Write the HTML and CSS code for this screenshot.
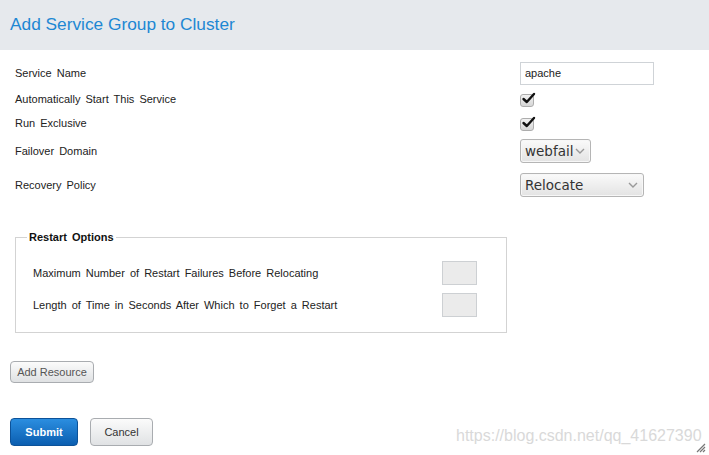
FILE: index.html
```html
<!DOCTYPE html>
<html lang="en">
<head>
  <meta charset="UTF-8" />
  <title>Add Service Group to Cluster</title>
  <link rel="stylesheet" href="styles.css">
</head>
<body>
  <div class="dialog">
    <div class="header">
      <h1>Add Service Group to Cluster</h1>
    </div>

    <div class="form">
      <div class="row row-name">
        <label for="serviceName">Service Name</label>
        <input type="text" id="serviceName" class="text-input" value="apache" />
      </div>

      <div class="row row-check">
        <label>Automatically Start This Service</label>
        <span class="check">
          <svg width="15" height="13" viewBox="0 0 15 13"><path d="M2.5 7 L5.8 10 L13 2" fill="none" stroke="#111" stroke-width="2.4" stroke-linecap="round" stroke-linejoin="round"/></svg>
        </span>
      </div>

      <div class="row row-check row-excl">
        <label>Run Exclusive</label>
        <span class="check">
          <svg width="15" height="13" viewBox="0 0 15 13"><path d="M2.5 7 L5.8 10 L13 2" fill="none" stroke="#111" stroke-width="2.4" stroke-linecap="round" stroke-linejoin="round"/></svg>
        </span>
      </div>

      <div class="row row-domain">
        <label>Failover Domain</label>
        <div class="select select-small">
          <span>webfail</span>
          <svg width="10" height="6" viewBox="0 0 10 6"><path d="M1 1 L5 5 L9 1" fill="none" stroke="#999" stroke-width="1.4"/></svg>
        </div>
      </div>

      <div class="row row-policy">
        <label>Recovery Policy</label>
        <div class="select select-wide">
          <span>Relocate</span>
          <svg width="10" height="6" viewBox="0 0 10 6"><path d="M1 1 L5 5 L9 1" fill="none" stroke="#999" stroke-width="1.4"/></svg>
        </div>
      </div>

      <fieldset class="options">
        <legend>Restart Options</legend>
        <div class="opt-row">
          <span>Maximum Number of Restart Failures Before Relocating</span>
          <input type="text" class="small-input" />
        </div>
        <div class="opt-row">
          <span>Length of Time in Seconds After Which to Forget a Restart</span>
          <input type="text" class="small-input" />
        </div>
      </fieldset>

      <button class="btn btn-resource">Add Resource</button>

      <div class="actions">
        <button class="btn btn-submit">Submit</button>
        <button class="btn btn-cancel">Cancel</button>
      </div>
    </div>

    <div class="watermark">https://blog.csdn.net/qq_41627390</div>
    <svg class="grip" width="11" height="11" viewBox="0 0 11 11">
      <path d="M10 2 L2 10 M10 5 L5 10 M10 8 L8 10" stroke="#777" stroke-width="1.2"/>
    </svg>
  </div>
</body>
</html>
```

FILE: styles.css
```css
* {
  box-sizing: border-box;
}

body {
  margin: 0;
  background-color: #ffffff;
  font-family: "Liberation Sans", Arial, sans-serif;
  color: #222;
}

.dialog {
  position: relative;
  width: 709px;
  height: 455px;
  overflow: hidden;
}

.header {
  height: 50px;
  background-color: #e6e9ed;
  padding: 14px 0 0 10px;
}

h1 {
  margin: 0;
  font-size: 17.3px;
  font-weight: normal;
  color: #1d87d3;
}

.form {
  padding: 11px 0 0 15px;
}

.row {
  display: flex;
  align-items: center;
  height: 24px;
}

.row label {
  width: 505px;
  font-size: 11px;
  word-spacing: 2px;
}

.row-check {
  margin-top: 2px;
}

.row-excl {
  margin-top: 0;
}

.row-domain {
  margin-top: 4px;
}

.row-policy {
  margin-top: 10px;
}

.text-input {
  width: 134px;
  height: 23px;
  border: 1px solid #cfd3d7;
  padding: 0 4px;
  font-family: "Liberation Sans", Arial, sans-serif;
  font-size: 11px;
  color: #222;
}

.check {
  position: relative;
  width: 14px;
  height: 13px;
  margin-top: 2px;
  border: 1px solid #adadad;
  border-radius: 3px;
  background: linear-gradient(#f2f2f2, #d6d6d6);
}

.check svg {
  position: absolute;
  left: 0;
  top: -3px;
}

.select {
  display: flex;
  align-items: center;
  justify-content: space-between;
  height: 24px;
  padding: 0 5px 0 4px;
  border: 1px solid #b5b5b5;
  border-radius: 3px;
  background: linear-gradient(#fafafa, #e3e3e3);
  box-shadow: inset 0 0 0 1px #f7f7f7;
  font-family: "DejaVu Sans", sans-serif;
  font-size: 13.5px;
  color: #333;
}

.select-small {
  width: 71px;
}

.select-wide {
  width: 124px;
}

.options {
  width: 492px;
  margin: 34px 0 0;
  padding: 18px 29px 15px 17px;
  border: 1px solid #d3d3d3;
}

.options legend {
  margin-left: -6px;
  padding: 0 2px;
  font-size: 11px;
  font-weight: bold;
  word-spacing: 2px;
  color: #111;
}

.opt-row {
  display: flex;
  align-items: center;
  justify-content: space-between;
  font-size: 11px;
  word-spacing: 2px;
}

.opt-row + .opt-row {
  margin-top: 8px;
}

.small-input {
  width: 35px;
  height: 24px;
  border: 1px solid #cdd0d3;
  background-color: #ebebeb;
}

.btn {
  display: block;
  border-radius: 4px;
  font-family: "Liberation Sans", Arial, sans-serif;
  font-size: 11px;
  cursor: pointer;
}

.btn-resource {
  width: 84px;
  height: 22px;
  margin: 28px 0 0 -5px;
  border: 1px solid #a9acb0;
  background: linear-gradient(#fbfbfb, #dfe1e3);
  color: #555;
}

.actions {
  display: flex;
  gap: 12px;
  margin: 35px 0 0 -5px;
}

.btn-submit {
  width: 68px;
  height: 28px;
  border: 1px solid #0c5299;
  background: linear-gradient(#2b8ee0, #0b5eb0);
  color: #fff;
  font-weight: bold;
}

.btn-cancel {
  width: 63px;
  height: 28px;
  border: 1px solid #a9acb0;
  background: linear-gradient(#fbfbfb, #e0e2e4);
  color: #333;
}

.watermark {
  position: absolute;
  left: 456px;
  top: 427px;
  font-size: 16px;
  color: #d9d9d9;
}

.grip {
  position: absolute;
  right: 3px;
  bottom: 2px;
}
```
